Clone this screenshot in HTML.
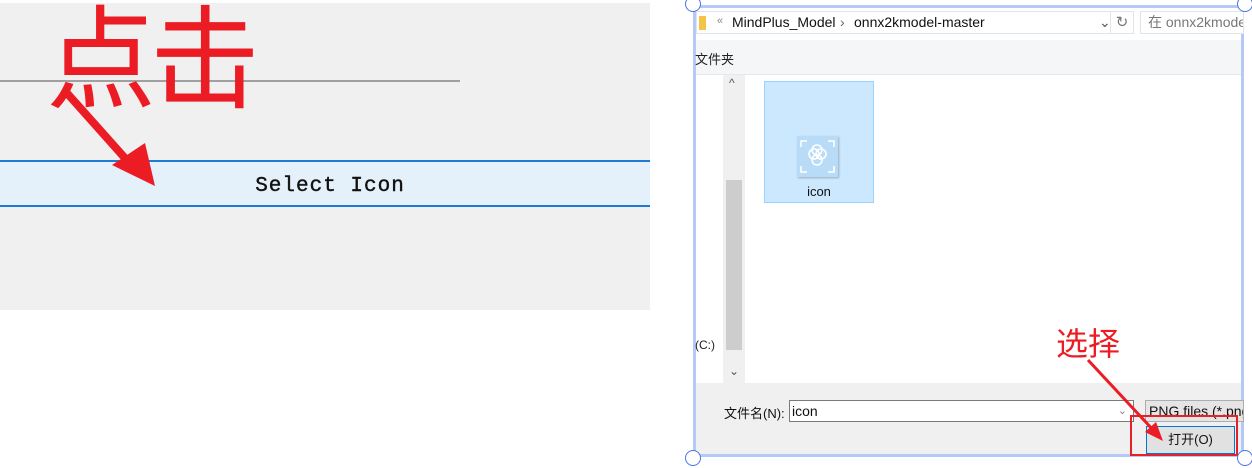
<!DOCTYPE html>
<html><head><meta charset="utf-8"><style>
*{margin:0;padding:0;box-sizing:border-box}
body{width:1252px;height:468px;background:#fff;position:relative;overflow:hidden;font-family:"Liberation Sans","Noto Sans CJK SC",sans-serif}
.a{position:absolute}
</style></head><body>
<!-- left panel -->
<div class="a" style="left:0;top:3px;width:650px;height:307px;background:#f0f0f0"></div>
<div class="a" style="left:0;top:80px;width:460px;height:2px;background:#a0a0a0"></div>
<div class="a" style="left:0;top:160px;width:650px;height:47px;background:#e4f0fa;border-top:2px solid #1f7ad6;border-bottom:2px solid #1f7ad6"></div>
<div class="a" style="left:230px;top:175px;width:200px;text-align:center;font-family:'Liberation Mono',monospace;font-size:21px;color:#111;letter-spacing:1px;-webkit-text-stroke:0.4px #111">Select Icon</div>
<div class="a" style="left:44px;top:-14px;font-family:'Noto Sans CJK SC',sans-serif;font-size:112px;line-height:130px;color:#ec1c24;letter-spacing:-6px;transform:scaleX(0.98)">点击</div>
<svg class="a" style="left:0;top:0" width="650" height="310"><line x1="66" y1="92" x2="132" y2="166" stroke="#ec1c24" stroke-width="8"/><polygon points="155,186 112,165 145,143" fill="#ec1c24"/></svg>

<!-- dialog -->
<div class="a" style="left:693px;top:5px;width:551px;height:452px;background:#f0f0f0;border:3px solid #b6c8f7"></div>
<div class="a" style="left:696px;top:8px;width:545px;height:32px;background:#fff"></div>
<div class="a" style="left:696px;top:11px;width:438px;height:23px;background:#fff;border:1px solid #e4e4e4;font-size:14px;color:#111;line-height:21px">
<span class="a" style="left:2px;top:4px;width:7px;height:14px;background:#f3c448"></span>
<span class="a" style="left:20px;top:-1px;color:#888;font-size:11px">«</span>
<span class="a" style="left:35px;top:0">MindPlus_Model</span>
<span class="a" style="left:143px;top:0;color:#666">›</span>
<span class="a" style="left:157px;top:0">onnx2kmodel-master</span>
<span class="a" style="left:402px;top:0;color:#555">⌄</span>
</div>
<div class="a" style="left:1110px;top:11px;width:24px;height:23px;border:1px solid #e4e4e4;background:#fff;color:#777;font-size:15px;text-align:center;line-height:21px">↻</div>
<div class="a" style="left:1140px;top:11px;width:104px;height:23px;border:1px solid #e4e4e4;background:#fff;color:#777;font-size:14px;line-height:21px;padding-left:7px;white-space:nowrap;overflow:hidden">在 onnx2kmodel</div>
<div class="a" style="left:696px;top:40px;width:545px;height:35px;background:#f5f6f7;border-bottom:1px solid #e8e8e8"></div>
<div class="a" style="left:695px;top:49px;font-size:13px;color:#222">文件夹</div>
<div class="a" style="left:696px;top:75px;width:545px;height:308px;background:#fff"></div>
<div class="a" style="left:723px;top:75px;width:22px;height:308px;background:#f0f0f0"></div>
<div class="a" style="left:726px;top:180px;width:16px;height:170px;background:#cdcdcd"></div>
<div class="a" style="left:729px;top:76px;font-size:12px;color:#555">^</div>
<div class="a" style="left:729px;top:364px;font-size:12px;color:#555">⌄</div>
<div class="a" style="left:695px;top:338px;font-size:12px;color:#222">(C:)</div>
<div class="a" style="left:764px;top:81px;width:110px;height:122px;background:#cce8ff;border:1px solid #99d1ff"></div>
<div class="a" style="left:797px;top:136px;width:41px;height:41px;background:#b8dcf8;box-shadow:1px 1px 2px #9ab"></div>
<svg class="a" style="left:797px;top:136px" width="41" height="41" fill="none" stroke="#fff" stroke-width="1.5"><path d="M4 11V5h6M31 5h6v6M37 30v6h-6M10 36H4v-6"/><circle cx="17" cy="18" r="5"/><circle cx="24" cy="18" r="5"/><circle cx="20" cy="14" r="5"/><circle cx="20" cy="24" r="5"/></svg>
<div class="a" style="left:764px;top:184px;width:110px;text-align:center;font-size:13px;color:#111">icon</div>
<div class="a" style="left:724px;top:403px;font-size:13px;color:#111">文件名(N):</div>
<div class="a" style="left:789px;top:400px;width:345px;height:22px;background:#fff;border:1px solid #7a7a7a;font-size:14px;line-height:20px;padding-left:2px;color:#111">icon<span class="a" style="right:6px;top:0;color:#888;font-size:11px">⌄</span></div>
<div class="a" style="left:1145px;top:400px;width:99px;height:22px;background:#e5e5e5;border:1px solid #adadad;font-size:14px;line-height:20px;padding-left:3px;color:#111;white-space:nowrap;overflow:hidden">PNG files (*.png)</div>
<div class="a" style="left:1146px;top:426px;width:89px;height:28px;background:#e1e1e1;border:1px solid #0078d7;font-size:13px;text-align:center;line-height:26px;color:#111">打开(O)</div>
<div class="a" style="left:1130px;top:415px;width:108px;height:41px;border:2px solid #e8202a"></div>
<!-- handles -->
<div class="a" style="left:685px;top:-4px;width:16px;height:16px;border-radius:50%;background:#fff;border:1.5px solid #4a74e8"></div>
<div class="a" style="left:1237px;top:-4px;width:16px;height:16px;border-radius:50%;background:#fff;border:1.5px solid #4a74e8"></div>
<div class="a" style="left:685px;top:450px;width:16px;height:16px;border-radius:50%;background:#fff;border:1.5px solid #4a74e8"></div>
<div class="a" style="left:1237px;top:450px;width:16px;height:16px;border-radius:50%;background:#fff;border:1.5px solid #4a74e8"></div>
<div class="a" style="left:1056px;top:322px;font-family:'Noto Sans CJK SC',sans-serif;font-size:32px;line-height:40px;color:#ec1c24">选择</div>
<svg class="a" style="left:0;top:0" width="1252" height="468"><line x1="1088" y1="360" x2="1155" y2="432" stroke="#ec1c24" stroke-width="3"/><polygon points="1163,441 1145,432 1156,422" fill="#ec1c24"/></svg>
</body></html>
